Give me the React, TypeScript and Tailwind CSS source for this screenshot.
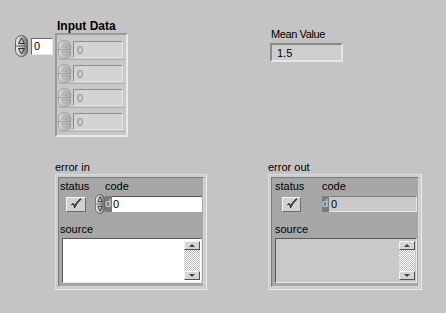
import React from 'react';

const Spinner = ({ w = 13, h = 22, faded = false }: { w?: number; h?: number; faded?: boolean }) => {
  const id = faded ? 'spinFaded' : 'spinNormal';
  const edge = faded ? '#9c9c9c' : '#5e5e5e';
  const arrow = faded ? '#a4a4a4' : '#303030';
  return (
    <svg width={w} height={h} viewBox="0 0 13 22" preserveAspectRatio="none" className="shrink-0">
      <defs>
        <linearGradient id={id} x1="0" x2="1" y1="0" y2="0">
          <stop offset="0" stopColor={faded ? '#dadada' : '#eeeeee'} />
          <stop offset="0.5" stopColor={faded ? '#c4c4c4' : '#bdbdbd'} />
          <stop offset="1" stopColor={faded ? '#a8a8a8' : '#6c6c6c'} />
        </linearGradient>
      </defs>
      <rect x="0.5" y="0.5" width="12" height="21" rx="6" fill={`url(#${id})`} stroke={edge} />
      <line x1="1" y1="11" x2="12" y2="11" stroke={edge} />
      <path d="M6.5 3 L9.5 8.5 L3.5 8.5 Z" fill="none" stroke={arrow} />
      <path d="M6.5 19 L9.5 13.5 L3.5 13.5 Z" fill="none" stroke={arrow} />
    </svg>
  );
};

const CheckButton = ({ w }: { w: number }) => (
  <div
    className="h-[15px] flex items-center justify-center bg-[#d2d2d2] border border-t-[#f4f4f4] border-l-[#f4f4f4] border-r-[#6a6a6a] border-b-[#6a6a6a]"
    style={{ width: w }}
  >
    <svg width="12" height="12" viewBox="0 0 12 11">
      <path
        d="M1.4 6.6 C2.2 5.2 3.6 5.4 4 7 L4.5 9.6 C6 6.4 8 3.2 11.2 0.7 L10.2 0.4 C8 2.2 6.1 4.6 4.7 7.2 C4.1 5 2.6 4.6 1.4 6.6 Z"
        fill="none"
        stroke="#1c1c1c"
        strokeWidth="1"
        strokeLinejoin="round"
      />
    </svg>
  </div>
);

const ScrollBar = () => (
  <div className="w-[16px] h-full flex flex-col py-[2px]">
    <div className="h-[9px] flex items-center justify-center bg-[#d4d4d4] border border-t-[#f4f4f4] border-l-[#f4f4f4] border-r-[#505050] border-b-[#505050]">
      <div className="w-0 h-0 border-l-[3px] border-r-[3px] border-b-[3px] border-l-transparent border-r-transparent border-b-[#404040]" />
    </div>
    <div className="flex-1 bg-[repeating-conic-gradient(#ffffff_0_25%,#bdbdbd_0_50%)] bg-[length:2px_2px]" />
    <div className="h-[9px] flex items-center justify-center bg-[#d4d4d4] border border-t-[#f4f4f4] border-l-[#f4f4f4] border-r-[#505050] border-b-[#505050]">
      <div className="w-0 h-0 border-l-[3px] border-r-[3px] border-t-[3px] border-l-transparent border-r-transparent border-t-[#404040]" />
    </div>
  </div>
);

interface ClusterProps {
  label: string;
  width: number;
  control: boolean;
}

const ErrorCluster = ({ label, width, control }: ClusterProps) => (
  <div style={{ width }}>
    <div className="leading-[13px] h-[13px] mt-[1px]">{label}</div>
    <div className="h-[116px] p-[2px] bg-[#cdcdcd] border border-t-[#dcdcdc] border-l-[#dcdcdc] border-r-[#ececec] border-b-[#ececec]">
      <div className="h-full bg-[#a6a6a6] border border-t-[#7c7c7c] border-l-[#7c7c7c] border-r-[#d6d6d6] border-b-[#d6d6d6] flex flex-col">
        <div className="flex mt-[2px]">
          <div className={control ? 'w-[36px] pl-[1px]' : 'w-[50px] pl-[3px]'}>
            <div className="leading-[13px] h-[13px]">status</div>
            <div className={`h-[20px] mt-[1px] flex items-center ${control ? 'pl-[6px]' : 'pl-[7px]'}`}>
              <CheckButton w={control ? 20 : 19} />
            </div>
          </div>
          <div className="flex-1">
            <div className={`leading-[13px] h-[13px] ${control ? 'pl-[10px]' : ''}`}>code</div>
            <div className="h-[20px] mt-[1px] flex items-center">
              {control && <Spinner w={10} h={20} />}
              <div className="h-[16px] w-[7px] bg-[#7a7a7a] text-[#d8d8d8] leading-[15px] text-[11px]">d</div>
              <div
                className={`h-[16px] flex-1 mr-[1px] leading-[15px] pl-[1px] ${
                  control
                    ? 'bg-white border-t border-t-[#555555]'
                    : 'bg-[#c9c9c9] border border-t-[#7a7a7a] border-l-transparent border-r-[#e6e6e6] border-b-[#e6e6e6]'
                }`}
              >
                0
              </div>
            </div>
          </div>
        </div>
        <div className={`leading-[13px] h-[13px] mt-[9px] ${control ? 'pl-[1px]' : 'pl-[3px]'}`}>source</div>
        <div
          className={`h-[45px] mt-[2px] ml-[3px] mr-[1px] flex justify-end pr-[1px] border border-t-[#5a5a5a] border-l-[#5a5a5a] border-r-[#e8e8e8] border-b-[#e8e8e8] ${
            control ? 'bg-white' : 'bg-[#c9c9c9]'
          }`}
        >
          <ScrollBar />
        </div>
      </div>
    </div>
  </div>
);

const ArrayElement = () => (
  <div className="h-[20px] flex items-center border-b border-b-[#b0b0b0]">
    <Spinner w={13} h={19} faded />
    <div className="ml-[2px] w-[50px] h-[17px] bg-[#d3d3d3] text-[#8c8c8c] leading-[16px] pl-[3px] border border-t-[#8e8e8e] border-l-[#8e8e8e] border-r-[#e4e4e4] border-b-[#e4e4e4]">
      0
    </div>
  </div>
);

export default function App() {
  return (
    <div className="w-[446px] h-[313px] overflow-hidden bg-[#c4c4c4] text-[11px] text-black font-['Liberation_Sans',Arial,sans-serif]">
      <div className="flex items-start h-[160px]">
        {/* numeric control */}
        <div className="ml-[15px] mt-[35px] flex items-center">
          <Spinner w={13} h={22} />
          <div className="ml-[3px] w-[22px] h-[17px] bg-white leading-[15px] pl-[2px] border border-t-[#6a6a6a] border-l-[#6a6a6a] border-r-[#e8e8e8] border-b-[#e8e8e8]">
            0
          </div>
        </div>

        {/* Input Data array */}
        <div className="ml-[2px] mt-[19px]">
          <div className="font-bold text-[12px] leading-[14px] pl-[2px]">Input Data</div>
          <div className="w-[73px] h-[104px] bg-[#c8c8c8] border-2 border-t-[#9a9a9a] border-l-[#9a9a9a] border-r-[#e8e8e8] border-b-[#e8e8e8] pt-[5px] pl-[1px] flex flex-col gap-[4px]">
            <ArrayElement />
            <ArrayElement />
            <ArrayElement />
            <ArrayElement />
          </div>
        </div>

        {/* Mean Value indicator */}
        <div className="ml-[142px] mt-[28px]">
          <div className="leading-[13px] pl-[1px] tracking-[-0.4px]">Mean Value</div>
          <div className="mt-[2px] w-[73px] h-[19px] bg-[#cecece] leading-[17px] pl-[5px] border-2 border-t-[#8a8a8a] border-l-[#8a8a8a] border-r-[#e6e6e6] border-b-[#e6e6e6]">
            1.5
          </div>
        </div>
      </div>

      <div className="flex">
        <div className="ml-[55px]">
          <ErrorCluster label="error in" width={152} control />
        </div>
        <div className="ml-[61px]">
          <ErrorCluster label="error out" width={154} control={false} />
        </div>
      </div>
    </div>
  );
}
